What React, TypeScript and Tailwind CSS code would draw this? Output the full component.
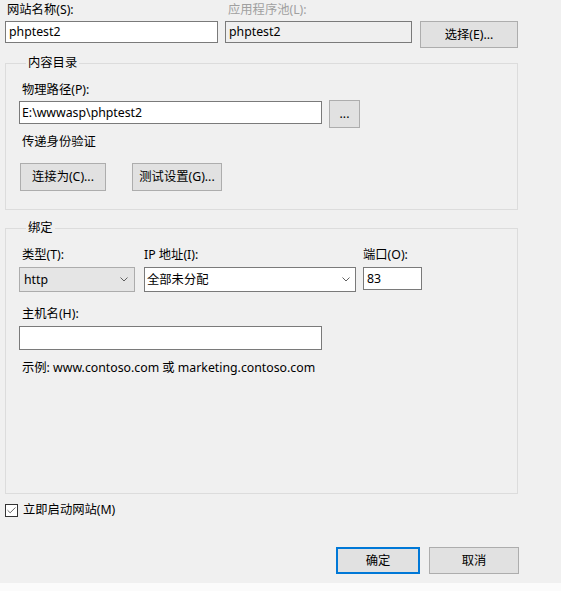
import { Check } from 'lucide-react';

const font = "font-['Noto_Sans','Noto_Sans_CJK_SC',sans-serif]";

function Chevron() {
  return (
    <svg width="8" height="5" viewBox="0 0 8 5" className="shrink-0">
      <path d="M0.5 0.5 L4 4 L7.5 0.5" fill="none" stroke="#606060" strokeWidth="1" />
    </svg>
  );
}

function WinButton({ label, className = '' }: { label: string; className?: string }) {
  return (
    <button className={`bg-[#e1e1e1] border border-[#adadad] flex items-center justify-center ${className}`}>
      {label}
    </button>
  );
}

export default function App() {
  return (
    <div className={`w-[561px] h-[591px] bg-[#f0f0f0] flex flex-col text-[12.3px] leading-[18px] text-black ${font}`}>
      {/* Site name / app pool */}
      <div className="pl-[5px] pt-[1px]">
        <div className="flex">
          <div className="w-[220px] pl-[2px]">网站名称(S):</div>
          <div className="pl-[3px] text-[#a0a0a0]">应用程序池(L):</div>
        </div>
        <div className="flex items-start mt-[2px]">
          <div className="w-[213px] h-[22px] bg-white border border-[#7a7a7a] pl-[3px] flex items-center">phptest2</div>
          <div className="w-[187px] h-[22px] ml-[7px] bg-[#efefef] border border-[#7a7a7a] pl-[3px] flex items-center">phptest2</div>
          <WinButton label="选择(E)..." className="w-[98px] h-[27px] ml-[8px]" />
        </div>
      </div>

      {/* Content directory */}
      <fieldset className="ml-[5px] w-[513px] mt-[6px] border border-[#dcdcdc] pl-[13px] pb-[18px]">
        <legend className="ml-[7px] px-[2px] leading-[18px]">内容目录</legend>
        <div className="pt-[9px] pl-[3px]">物理路径(P):</div>
        <div className="flex items-start mt-[1px]">
          <div className="w-[303px] h-[23px] mt-[1px] bg-white border border-[#7a7a7a] pl-[2px] flex items-center">E:\wwwasp\phptest2</div>
          <WinButton label="..." className="w-[31px] h-[28px] ml-[7px]" />
        </div>
        <div className="mt-[5px] pl-[3px]">传递身份验证</div>
        <div className="flex mt-[12px] ml-[1px] gap-[26px]">
          <WinButton label="连接为(C)..." className="w-[86px] h-[28px]" />
          <WinButton label="测试设置(G)..." className="w-[90px] h-[28px]" />
        </div>
      </fieldset>

      {/* Binding */}
      <fieldset className="ml-[5px] w-[513px] h-[275px] mt-[9px] border border-[#dcdcdc] pl-[13px]">
        <legend className="ml-[7px] px-[2px] leading-[18px]">绑定</legend>
        <div className="flex pt-[9px]">
          <div className="w-[125px]">
            <div className="pl-[3px]">类型(T):</div>
            <div className="mt-[3px] w-[116px] h-[25px] bg-[#e5e5e5] border border-[#acacac] flex items-center justify-between pl-[4px] pr-[6px]">
              <span>http</span>
              <Chevron />
            </div>
          </div>
          <div className="w-[219px]">
            <div>IP 地址(I):</div>
            <div className="mt-[3px] w-[212px] h-[25px] bg-white border border-[#7a7a7a] flex items-center justify-between pl-[2px] pr-[5px]">
              <span>全部未分配</span>
              <Chevron />
            </div>
          </div>
          <div>
            <div>端口(O):</div>
            <div className="mt-[3px] w-[59px] h-[23px] bg-white border border-[#7a7a7a] pl-[3px] flex items-center">83</div>
          </div>
        </div>
        <div className="mt-[13px] pl-[3px]">主机名(H):</div>
        <div className="mt-[3px] w-[303px] h-[24px] bg-white border border-[#7a7a7a]" />
        <div className="mt-[9px] pl-[3px]">示例: www.contoso.com 或 marketing.contoso.com</div>
      </fieldset>

      {/* Start immediately */}
      <div className="flex items-center mt-[7px] ml-[5px]">
        <div className="w-[13px] h-[13px] border border-[#333333] bg-white flex items-center justify-center">
          <Check size={11} strokeWidth={1.5} color="#222" />
        </div>
        <span className="ml-[5px]">立即启动网站(M)</span>
      </div>

      {/* Dialog buttons */}
      <div className="mt-auto flex justify-end pr-[42px] mb-[9px] gap-[9px]">
        <button className="w-[84px] h-[27px] bg-[#e1e1e1] border-2 border-[#0078d7] flex items-center justify-center">确定</button>
        <WinButton label="取消" className="w-[90px] h-[27px]" />
      </div>
      <div className="h-[8px] bg-[#fbfbfb]" />
    </div>
  );
}
